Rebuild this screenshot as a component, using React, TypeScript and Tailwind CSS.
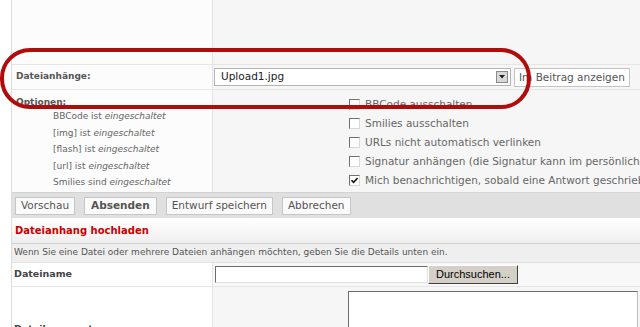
import React from "react";

const enabledFlags = [
  { tag: "BBCode ist", state: "eingeschaltet" },
  { tag: "[img] ist", state: "eingeschaltet" },
  { tag: "[flash] ist", state: "eingeschaltet" },
  { tag: "[url] ist", state: "eingeschaltet" },
  { tag: "Smilies sind", state: "eingeschaltet" },
];

const postOptions = [
  { label: "BBCode ausschalten", checked: false },
  { label: "Smilies ausschalten", checked: false },
  { label: "URLs nicht automatisch verlinken", checked: false },
  { label: "Signatur anhängen (die Signatur kann im persönlichen Bereich geändert werden)", checked: false },
  { label: "Mich benachrichtigen, sobald eine Antwort geschrieben wurde", checked: true },
];

const Checkbox: React.FC<{ checked: boolean }> = ({ checked }) => (
  <span className="relative inline-block w-[11px] h-[11px] shrink-0 bg-white border border-t-[#6f6f6f] border-l-[#6f6f6f] border-r-[#d8d8d8] border-b-[#d8d8d8]">
    {checked && (
      <svg viewBox="0 0 9 9" className="absolute inset-0 w-[9px] h-[9px]">
        <path d="M1.5 4.2 L3.6 6.4 L7.6 2" stroke="#111" strokeWidth="1.6" fill="none" />
      </svg>
    )}
  </span>
);

export default function App() {
  return (
    <div className="relative w-[640px] h-[327px] overflow-hidden bg-white font-['DejaVu_Sans',sans-serif]">
      <div className="ml-[11px] border-l border-[#dcdcdc]">
        {/* empty top row */}
        <div className="grid grid-cols-[201px_1fr] h-[65px] border-b border-[#e6e6e6]">
          <div className="bg-[#fcfcfc] border-r border-[#e4e4e4]" />
          <div className="bg-[#f6f6f6]" />
        </div>

        {/* attachments */}
        <div className="grid grid-cols-[201px_1fr] h-[25px] border-b border-[#e6e6e6]">
          <div className="bg-[#fcfcfc] border-r border-[#e4e4e4] flex items-center pl-[4px] text-[9px] font-bold text-[#555]">
            Dateianhänge:
          </div>
          <div className="bg-[#f6f6f6] flex items-center pl-[1px] gap-[3px]">
            <div className="w-[297px] h-[18px] bg-white border border-[#b4b4b4] flex items-center justify-between pl-[6px] pr-[2px]">
              <span className="text-[10.5px] text-[#222]">Upload1.jpg</span>
              <span className="w-[12px] h-[12px] bg-[#d8d8d8] border border-[#8a8a8a] flex items-center justify-center">
                <svg viewBox="0 0 6 4" className="w-[6px] h-[4px]">
                  <path d="M0 0 H6 L3 3.5 Z" fill="#222" />
                </svg>
              </span>
            </div>
            <button className="h-[19px] px-[4px] bg-white border border-[#c4c4c4] text-[10.5px] text-[#555] leading-none">
              Im Beitrag anzeigen
            </button>
          </div>
        </div>

        {/* options */}
        <div className="grid grid-cols-[201px_1fr] h-[102px]">
          <div className="bg-[#fcfcfc] border-r border-[#e4e4e4] pl-[4px]">
            <div className="mt-[6px] leading-[12px] text-[9px] font-bold text-[#555]">Optionen:</div>
            <ul className="pl-[37px]">
              {enabledFlags.map((f) => (
                <li key={f.tag} className="leading-[16.5px] text-[9px] text-[#666]">
                  {f.tag} <em>{f.state}</em>
                </li>
              ))}
            </ul>
          </div>
          <div className="bg-[#f6f6f6] pt-[5px] pl-[136px]">
            {postOptions.map((o) => (
              <div key={o.label} className="h-[19px] flex items-center gap-[5px] whitespace-nowrap">
                <Checkbox checked={o.checked} />
                <span className="text-[10.5px] text-[#666]">{o.label}</span>
              </div>
            ))}
          </div>
        </div>

        {/* submit buttons */}
        <div className="h-[26px] bg-[#e0e0e0] flex items-center gap-[9px] pl-[3px] border-t border-[#d4d4d4]">
          {["Vorschau", "Absenden", "Entwurf speichern", "Abbrechen"].map((b) => (
            <button
              key={b}
              className={`h-[18px] px-[5px] bg-[#fafafa] border border-[#c6c6c6] text-[10.5px] leading-none text-[#555] ${
                b === "Absenden" ? "font-bold px-[6px]" : ""
              }`}
            >
              {b}
            </button>
          ))}
        </div>

        {/* upload section */}
        <div className="h-[26px] bg-gradient-to-b from-white to-[#efefef] border-b border-[#cfcfcf] flex items-center pl-[3px]">
          <span className="text-[10px] font-bold text-[#cc0000]">Dateianhang hochladen</span>
        </div>
        <div className="h-[19px] bg-[#efefef] border-b border-[#e2e2e2] flex items-center pl-[2px]">
          <span className="text-[9px] text-[#555]">
            Wenn Sie eine Datei oder mehrere Dateien anhängen möchten, geben Sie die Details unten ein.
          </span>
        </div>
        <div className="grid grid-cols-[201px_1fr] h-[24px] border-b border-[#e6e6e6]">
          <div className="bg-white border-r border-[#e4e4e4] flex items-center pl-[2px] text-[9.5px] font-bold text-[#444]">
            Dateiname
          </div>
          <div className="bg-[#f8f8f8] flex items-center pl-[2px] gap-0">
            <div className="w-[213px] h-[17px] bg-white border border-t-[#6c6c6c] border-l-[#6c6c6c] border-r-[#e2e2e2] border-b-[#e2e2e2]" />
            <button className="w-[90px] h-[19px] bg-[#d4d0c8] border border-t-white border-l-white border-r-[#404040] border-b-[#404040] font-['Liberation_Sans',sans-serif] text-[11px] text-black leading-none">
              Durchsuchen...
            </button>
          </div>
        </div>
        <div className="grid grid-cols-[201px_1fr] h-[60px]">
          <div className="bg-white border-r border-[#e4e4e4] pl-[2px] pt-[35px] text-[9.5px] font-bold text-[#444]">
            Dateikommentar
          </div>
          <div className="bg-[#f6f6f6] pl-[135px] pt-[4px]">
            <div className="w-[290px] h-[60px] bg-white border border-t-[#6c6c6c] border-l-[#6c6c6c] border-r-[#bdbdbd] border-b-[#bdbdbd]" />
          </div>
        </div>
      </div>

      {/* red highlight annotation */}
      <div className="absolute left-0 top-[48px] w-[531px] h-[61px] border-[4px] border-[#b10c0c] rounded-[30px] pointer-events-none" />
    </div>
  );
}
